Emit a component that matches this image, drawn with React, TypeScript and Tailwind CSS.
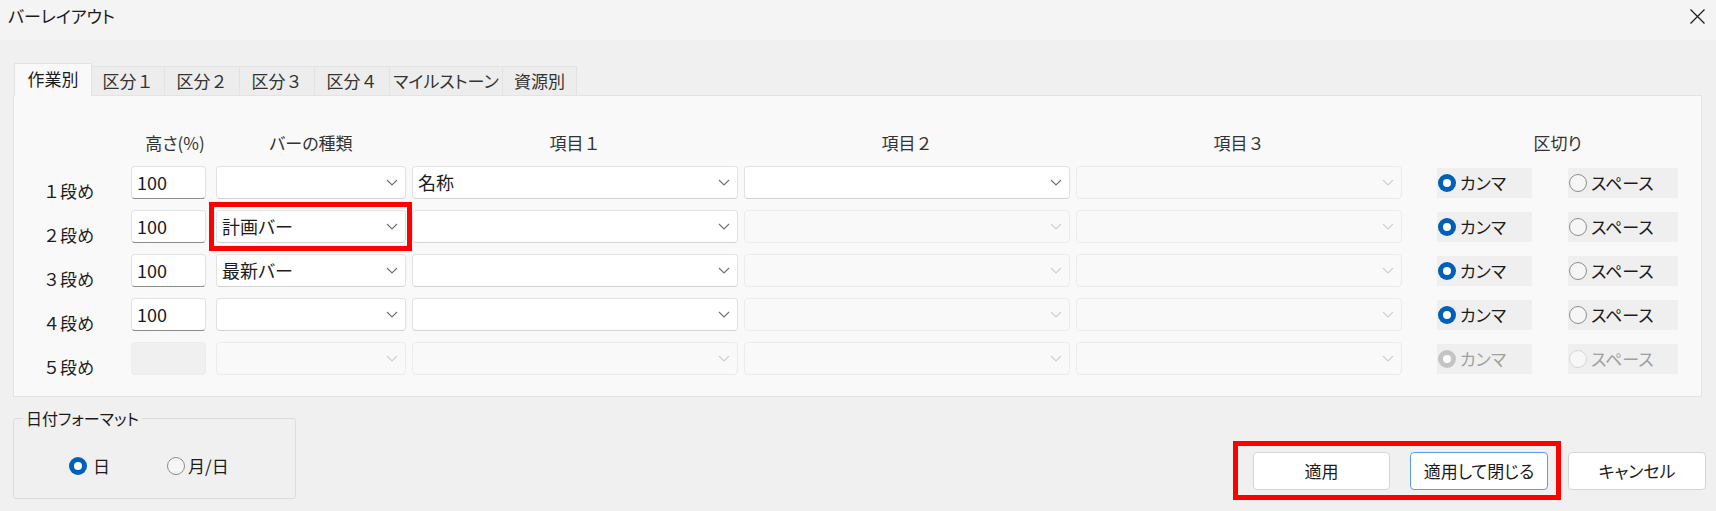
import clsx from "clsx";

type Row = {
  num: string;
  height: string;
  heightDisabled?: boolean;
  bar: string;
  barDisabled?: boolean;
  item1: string;
  item1Disabled?: boolean;
  item2Disabled: boolean;
  radiosDisabled?: boolean;
  marked?: boolean;
};

const ROWS: Row[] = [
  { num: "１", height: "100", bar: "", item1: "名称", item2Disabled: false },
  { num: "２", height: "100", bar: "計画バー", item1: "", item2Disabled: true, marked: true },
  { num: "３", height: "100", bar: "最新バー", item1: "", item2Disabled: true },
  { num: "４", height: "100", bar: "", item1: "", item2Disabled: true },
  {
    num: "５", height: "", heightDisabled: true, bar: "", barDisabled: true,
    item1: "", item1Disabled: true, item2Disabled: true, radiosDisabled: true,
  },
];

const TABS = [
  { label: "作業別", w: "w-[78px]" },
  { label: "区分", num: "１", w: "w-[73px]" },
  { label: "区分", num: "２", w: "w-[75px]" },
  { label: "区分", num: "３", w: "w-[75px]" },
  { label: "区分", num: "４", w: "w-[75px]" },
  { label: "マイルストーン", w: "w-[113px]" },
  { label: "資源別", w: "w-[74px]" },
];

// full-width digit keeps its full advance (palt off), like the dialog font
function Num({ n }: { n: string }) {
  return <span className="[font-feature-settings:normal]">{n}</span>;
}

function Chevron({ disabled }: { disabled?: boolean }) {
  return (
    <svg width="12" height="7" viewBox="0 0 12 7">
      <path d="M1 1l5 5 5-5" fill="none" stroke={disabled ? "#cfcfcf" : "#707070"} strokeWidth="1.1" />
    </svg>
  );
}

function Select({ value, disabled, className }: { value?: string; disabled?: boolean; className: string }) {
  return (
    <div
      className={clsx(
        "h-[33px] rounded-[4px] border flex items-center justify-between pl-[5px] pr-[7px]",
        disabled ? "bg-[#f9f9f9] border-[#ececec]" : "bg-white border-[#e2e2e2] border-b-[#d3d3d3]",
        className
      )}
    >
      <span className="text-[18px] text-[#1b1b1b]">{value}</span>
      <Chevron disabled={disabled} />
    </div>
  );
}

function Radio({ checked, disabled }: { checked?: boolean; disabled?: boolean }) {
  if (checked) {
    return (
      <span
        className={clsx(
          "w-[18px] h-[18px] rounded-full flex items-center justify-center shrink-0",
          disabled ? "bg-[#c4c4c4]" : "bg-[#005fb8]"
        )}
      >
        <span className="w-[8px] h-[8px] rounded-full bg-white" />
      </span>
    );
  }
  return (
    <span
      className={clsx(
        "w-[18px] h-[18px] rounded-full border shrink-0",
        disabled ? "border-[#d6d6d6] bg-[#f7f7f7]" : "border-[#8d8d8d] bg-[#f6f6f6]"
      )}
    />
  );
}

function RadioBox({ label, checked, disabled, className }: { label: string; checked?: boolean; disabled?: boolean; className: string }) {
  return (
    <div className={clsx("h-[30px] bg-[#efefef] flex items-center pl-[1px] gap-[4px]", className)}>
      <Radio checked={checked} disabled={disabled} />
      <span className={clsx("text-[17px]", disabled ? "text-[#a0a0a0]" : "text-[#1b1b1b]")}>{label}</span>
    </div>
  );
}

function RowLine({ row }: { row: Row }) {
  return (
    <div className="flex h-[33px]">
      <div className="w-[117px] pl-[29px] flex items-end">
        <span className="text-[17px] leading-[20px] text-[#1b1b1b] -mb-[2px]">
          <Num n={row.num} />段め
        </span>
      </div>
      <div
        className={clsx(
          "w-[75px] h-[33px] rounded-[4px] border flex items-center pl-[5px] text-[18px] text-[#1b1b1b]",
          row.heightDisabled ? "bg-[#f0f0f0] border-[#ececec]" : "bg-white border-[#e3e3e3] border-b-[#8c8c8c]"
        )}
      >
        {row.height}
      </div>
      <div className="relative ml-[10px]">
        <Select value={row.bar} disabled={row.barDisabled} className="w-[190px]" />
        {row.marked && (
          <div className="absolute -left-[7px] -right-[6px] -top-[8px] -bottom-[8px] border-[5px] border-[#ff0000] pointer-events-none" />
        )}
      </div>
      <Select value={row.item1} disabled={row.item1Disabled} className="w-[326px] ml-[6px]" />
      <Select disabled={row.item2Disabled} className="w-[326px] ml-[6px]" />
      <Select disabled className="w-[326px] ml-[6px]" />
      <div className="flex items-center ml-[35px]">
        <RadioBox label="カンマ" checked disabled={row.radiosDisabled} className="w-[95px]" />
        <RadioBox label="スペース" disabled={row.radiosDisabled} className="w-[110px] ml-[36px]" />
      </div>
    </div>
  );
}

export default function App() {
  return (
    <div className="w-[1716px] h-[511px] bg-[#f0f0f0] overflow-hidden font-['Noto_Sans_CJK_JP','Noto_Sans',sans-serif] [font-feature-settings:'palt'] text-[#1b1b1b]">
      {/* title bar */}
      <div className="h-[40px] bg-[#f3f4f3] flex items-center justify-between pl-[8px] pr-[10px]">
        <span className="text-[17px] leading-none -mt-[9px]">バーレイアウト</span>
        <svg width="17" height="17" viewBox="0 0 17 17" className="-mt-[8px]">
          <path d="M1.5 1.5l14 14M15.5 1.5l-14 14" stroke="#1f1f1f" strokeWidth="1.3" />
        </svg>
      </div>

      <div className="pl-[13px] pr-[14px] pt-[23px]">
        {/* tabs */}
        <div className="flex items-end h-[32px] pl-[1px]">
          {TABS.map((t, i) => (
            <div
              key={t.label + (t.num ?? "")}
              className={clsx(
                "flex items-center justify-center text-[17px] border-t border-r border-[#e3e3e3]",
                t.w,
                i === 0
                  ? "h-[33px] bg-[#f9f9f9] border-l relative z-10 -mb-px pb-[2px]"
                  : "h-[29px] bg-[#ededed] text-[#333]"
              )}
            >
              {t.label}
              {t.num && <Num n={t.num} />}
            </div>
          ))}
        </div>

        {/* panel */}
        <div className="h-[302px] border border-[#e3e3e3] bg-[#f9f9f9] pt-[36px]">
          <div className="flex h-[22px] items-center text-[17px] text-[#333]">
            <div className="w-[117px]" />
            <div className="w-[75px] pl-[13px] text-center whitespace-nowrap">高さ(%)</div>
            <div className="w-[190px] ml-[10px] text-center">バーの種類</div>
            <div className="w-[326px] ml-[6px] text-center">項目<Num n="１" /></div>
            <div className="w-[326px] ml-[6px] text-center">項目<Num n="２" /></div>
            <div className="w-[326px] ml-[6px] text-center">項目<Num n="３" /></div>
            <div className="w-[241px] ml-[35px] text-center">区切り</div>
          </div>
          <div className="mt-[12px] flex flex-col gap-[11px]">
            {ROWS.map((r) => (
              <RowLine key={r.num} row={r} />
            ))}
          </div>
        </div>
      </div>

      {/* bottom */}
      <div className="pl-[13px] pr-[10px] mt-[21px] flex justify-between items-start">
        <div className="relative w-[283px] h-[81px] border border-[#dcdcdc] rounded-[3px] pl-[55px] pt-[38px] flex">
          <span className="absolute left-[9px] -top-[12px] px-[3px] bg-[#f0f0f0] text-[16px] leading-[22px]">日付フォーマット</span>
          <div className="w-[98px] flex items-center gap-[6px] h-[18px]">
            <Radio checked />
            <span className="text-[17px]">日</span>
          </div>
          <div className="flex items-center gap-[3px] h-[18px]">
            <Radio />
            <span className="text-[17px]">月/日</span>
          </div>
        </div>

        <div className="flex gap-[20px] pt-[34px]">
          <div className="relative flex gap-[20px]">
            <button className="w-[137px] h-[38px] bg-white border border-[#d5d5d5] rounded-[4px] text-[17px]">適用</button>
            <button className="w-[138px] h-[38px] bg-white border border-[#5b9fe0] rounded-[4px] text-[17px]">適用して閉じる</button>
            <div className="absolute -left-[20px] -right-[13px] -top-[11px] -bottom-[10px] border-[5px] border-[#ff0000] pointer-events-none" />
          </div>
          <button className="w-[138px] h-[38px] bg-white border border-[#d5d5d5] rounded-[4px] text-[17px]">キャンセル</button>
        </div>
      </div>
    </div>
  );
}
